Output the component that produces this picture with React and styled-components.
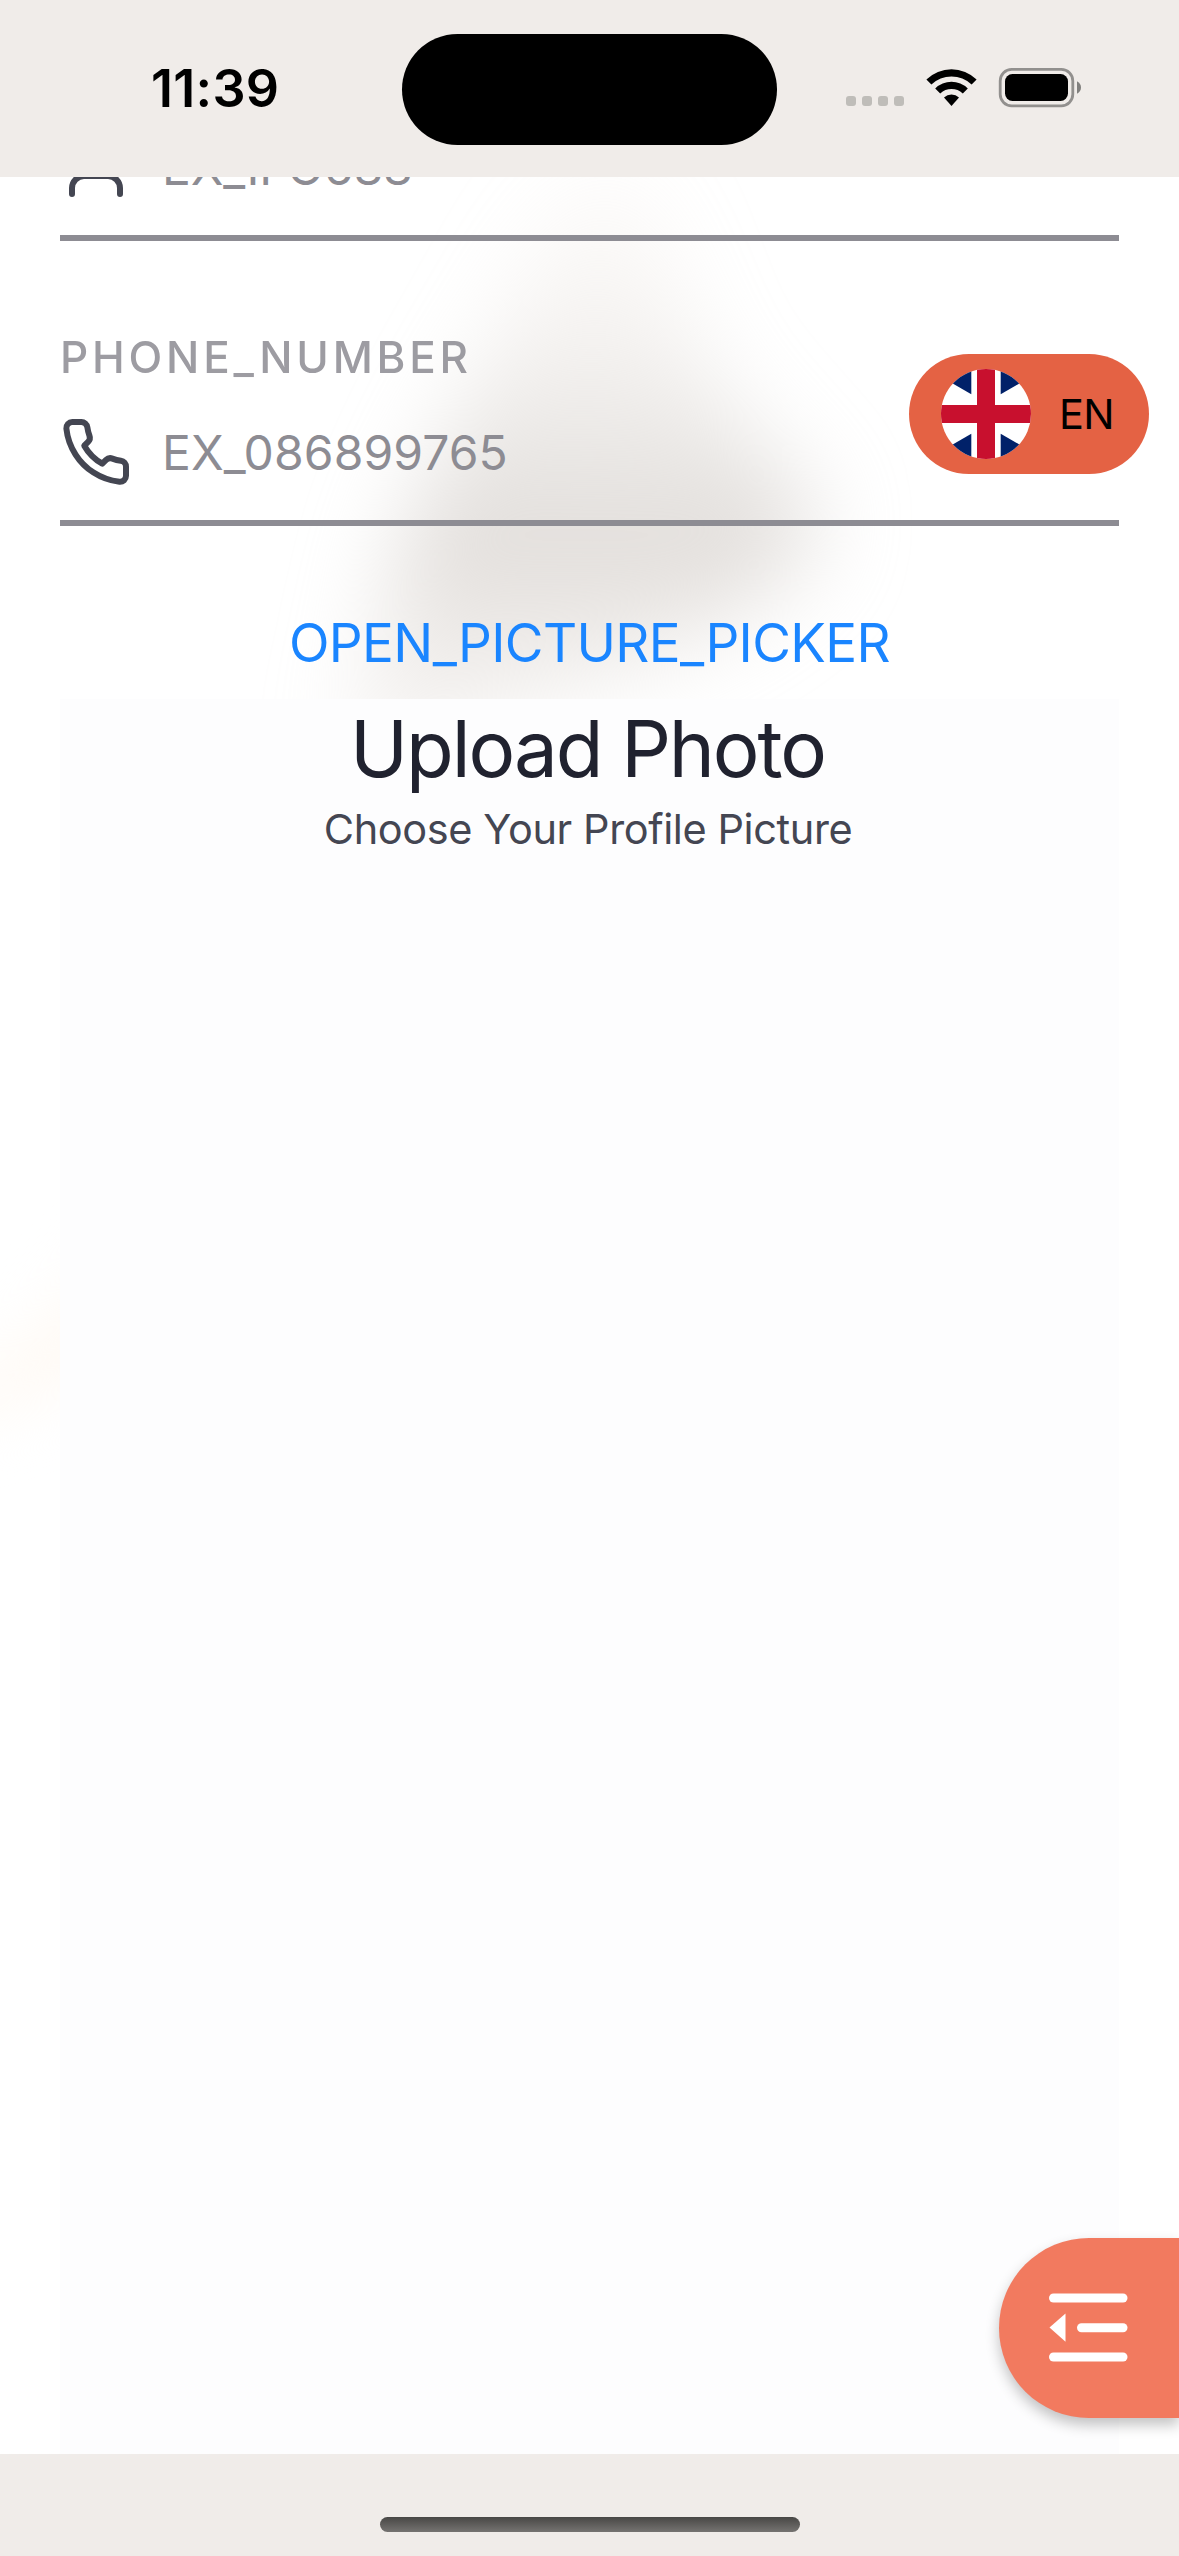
import React from "react";
import styled, { createGlobalStyle } from "styled-components";

const GlobalStyle = createGlobalStyle`
  * { box-sizing: border-box; }
  body { margin: 0; background: #fff; }
`;

const Screen = styled.div`
  position: relative;
  display: flex;
  flex-direction: column;
  width: 1179px;
  height: 2556px;
  overflow: hidden;
  background: #fff;
  font-family: Inter, "Liberation Sans", sans-serif;
`;

const StatusBar = styled.header`
  display: flex;
  flex: none;
  align-items: flex-start;
  height: 177px;
  padding: 33.5px 0 0 151px;
  background: #f0ece9;
`;

const Time = styled.time`
  flex: none;
  width: 251px;
  padding-top: 24px;
  font-size: 52px;
  line-height: 62px;
  font-weight: 600;
  letter-spacing: 0.3px;
  color: #000;
`;

const Island = styled.div`
  flex: none;
  width: 375px;
  height: 111px;
  border-radius: 56px;
  background: #000;
`;

const StatusIcons = styled.svg`
  display: block;
  flex: none;
  margin: 30.5px 0 0 69px;
`;

const Content = styled.main`
  position: relative;
  display: flex;
  flex: 1;
  flex-direction: column;
  min-height: 0;
  overflow: hidden;
  padding: 0 60px;
`;

const Backdrop = styled.svg`
  position: absolute;
  top: 0;
  left: 0;
`;

const Field = styled.label`
  position: relative;
  display: flex;
  flex: none;
  flex-direction: column;
  justify-content: flex-end;
  height: ${(p) => p.$height}px;
  border-bottom: 6px solid #8d8c93;
`;

const FieldLabel = styled.span`
  padding-left: 0;
  margin-bottom: 32px;
  font-size: 44px;
  line-height: 54px;
  font-weight: 450;
  letter-spacing: 3.8px;
  color: #8d8c93;
  opacity: 0.86;
`;

const FieldRow = styled.span`
  display: flex;
  align-items: center;
  height: 72px;
  margin-bottom: 32px;
  gap: 30px;
`;

const Placeholder = styled.span`
  padding-top: 2px;
  font-size: 48px;
  line-height: 58px;
  letter-spacing: ${(p) => p.$track};
  color: #8d8c93;
`;

const LineIcon = styled.svg.attrs({ width: 72, height: 72, viewBox: "0 0 24 24" })`
  flex: none;
  fill: none;
  stroke: #444652;
  stroke-width: 2;
  stroke-linecap: round;
  stroke-linejoin: round;
`;

const PickerLink = styled.button`
  position: relative;
  flex: none;
  height: 173px;
  padding: 61px 0 0;
  border: 0;
  background: none;
  font-family: inherit;
  font-size: 53px;
  line-height: 112px;
  letter-spacing: -0.62px;
  white-space: nowrap;
  color: #1a85ff;
`;

const PhotoPanel = styled.section`
  position: relative;
  display: flex;
  flex: 1;
  flex-direction: column;
  align-items: center;
  padding-top: 2px;
  background: #fdfdfe;
`;

const Title = styled.h1`
  margin: 0;
  padding-right: 4px;
  font-size: 78px;
  line-height: 96px;
  font-weight: 400;
  letter-spacing: -2.1px;
  color: #20222f;
`;

const Subtitle = styled.p`
  margin: 7px 0 0;
  padding-right: 3px;
  font-size: 41.5px;
  line-height: 50px;
  letter-spacing: -0.4px;
  color: #444652;
`;

const LanguagePill = styled.button`
  position: absolute;
  top: 354px;
  left: 909px;
  display: flex;
  align-items: center;
  width: 240px;
  height: 120px;
  padding: 0 0 0 32px;
  gap: 28px;
  border: 0;
  border-radius: 60px;
  background: #e46244;
  font-family: inherit;
  font-size: 41.5px;
  line-height: 50px;
  letter-spacing: -0.6px;
  color: #000;
`;

const MenuButton = styled.button`
  position: absolute;
  top: 2238px;
  right: 0;
  width: 180px;
  height: 180px;
  padding: 0 0 0 49px;
  border: 0;
  border-radius: 90px 0 0 90px;
  background: #f27a5f;
  box-shadow: 0 7px 14px rgba(0, 0, 0, 0.24);

  svg { display: block; }
`;

const HomeBar = styled.footer`
  display: flex;
  flex: none;
  justify-content: center;
  height: 102px;
  padding-top: 63px;
  background: #f0ece9;
`;

const HomeIndicator = styled.div`
  width: 420px;
  height: 15px;
  border-radius: 8px;
  background: linear-gradient(#484745, #757371);
`;

function Status() {
  return (
    <StatusIcons width="240" height="50" viewBox="846 64 240 50">
      {[846, 862, 878, 894].map((x) => (
        <rect key={x} x={x} y="96" width="10" height="10" rx="3" fill="#bfbdb9" />
      ))}
      <path d="M926.4 79.5a36 36 0 0 1 50.2 0l-5 5a29 29 0 0 0-40.2 0z" />
      <path d="M935.2 88.4a23.5 23.5 0 0 1 32.6 0l-5 5a17 17 0 0 0-22.6 0z" />
      <path d="M944 97.4a11.5 11.5 0 0 1 15 0l-7.5 8.6z" />
      <rect x="1000.2" y="69.4" width="72.6" height="36.4" rx="11.5" fill="none" stroke="#92908e" strokeWidth="2.8" />
      <rect x="1005" y="74" width="63" height="27" rx="7.5" />
      <path d="M1077 81.3q4 2.2 4 6.2t-4 6.2z" fill="#81807e" />
    </StatusIcons>
  );
}

function Flag() {
  return (
    <svg width="90" height="90" viewBox="0 0 90 90">
      <defs>
        <clipPath id="round"><circle cx="45" cy="45" r="45" /></clipPath>
      </defs>
      <g clipPath="url(#round)">
        <rect width="90" height="90" fill="#fff" />
        <g fill="#012169">
          <path d="M30.3 25.2V-10H-10V2z" />
          <path d="M59.7 25.2V-10H100V2z" />
          <path d="M30.3 64.8V100H-10V88z" />
          <path d="M59.7 64.8V100H100V88z" />
        </g>
        <path d="M36 0h18v36h36v18H54v36H36V54H0V36h36z" fill="#c8102e" />
      </g>
    </svg>
  );
}

export default function App() {
  return (
    <Screen>
      <GlobalStyle />
      <StatusBar>
        <Time>11:39</Time>
        <Island />
        <Status />
      </StatusBar>
      <Content>
        <Backdrop width="1179" height="1400" viewBox="0 177 1179 1400">
          <defs>
            <linearGradient id="haze" gradientUnits="userSpaceOnUse" x1="600" y1="180" x2="590" y2="750">
              <stop offset="0" stopColor="#e6d8cd" stopOpacity="0.08" />
              <stop offset="0.28" stopColor="#dcd5cf" stopOpacity="0.3" />
              <stop offset="0.5" stopColor="#dad6d2" stopOpacity="0.6" />
              <stop offset="0.64" stopColor="#dad5d1" stopOpacity="0.8" />
              <stop offset="0.8" stopColor="#dbd5d0" stopOpacity="0.48" />
              <stop offset="1" stopColor="#ddd5ce" stopOpacity="0.26" />
            </linearGradient>
            <filter id="soft" x="-40%" y="-40%" width="180%" height="180%" colorInterpolationFilters="sRGB">
              <feGaussianBlur stdDeviation="44" />
            </filter>
            <filter id="faint" x="-80%" y="-80%" width="260%" height="260%" colorInterpolationFilters="sRGB">
              <feGaussianBlur stdDeviation="30" />
            </filter>
          </defs>
          <path
            d="M615 150C660 170 670 270 700 350C730 415 785 460 820 515C810 580 700 650 580 685L340 770L380 620C405 520 445 430 490 340C530 260 560 170 615 150z"
            fill="url(#haze)"
            filter="url(#soft)"
          />
          <path d="M-60 1400L20 1340L130 1240V1370L-60 1430z" fill="#fffaf5" filter="url(#faint)" />
        </Backdrop>
        <Field $height={64}>
          <FieldRow>
            <LineIcon>
              <path d="M20 21v-2a4 4 0 0 0-4-4H8a4 4 0 0 0-4 4v2" />
              <circle cx="12" cy="7" r="4" />
            </LineIcon>
            <Placeholder $track="-0.2px">EX_IFO688</Placeholder>
          </FieldRow>
        </Field>
        <Field $height={285}>
          <FieldLabel>PHONE_NUMBER</FieldLabel>
          <FieldRow>
            <LineIcon>
              <path d="M22 16.92v3a2 2 0 0 1-2.18 2 19.79 19.79 0 0 1-8.63-3.07 19.5 19.5 0 0 1-6-6 19.79 19.79 0 0 1-3.07-8.67A2 2 0 0 1 4.11 2h3a2 2 0 0 1 2 1.72 12.84 12.84 0 0 0 .7 2.81 2 2 0 0 1-.45 2.11L8.09 9.91a16 16 0 0 0 6 6l1.27-1.27a2 2 0 0 1 2.11-.45 12.84 12.84 0 0 0 2.81.7A2 2 0 0 1 22 16.92z" />
            </LineIcon>
            <Placeholder $track="0.1px">EX_086899765</Placeholder>
          </FieldRow>
        </Field>
        <PickerLink>OPEN_PICTURE_PICKER</PickerLink>
        <PhotoPanel>
          <Title>Upload Photo</Title>
          <Subtitle>Choose Your Profile Picture</Subtitle>
        </PhotoPanel>
      </Content>
      <HomeBar>
        <HomeIndicator />
      </HomeBar>
      <LanguagePill>
        <Flag />
        <span>EN</span>
      </LanguagePill>
      <MenuButton aria-label="Menu">
        <svg width="82" height="70" viewBox="0 0 82 70" fill="#fff">
          <rect x="1" y="0.5" width="78.5" height="9" rx="4.5" />
          <rect x="29" y="30.3" width="50.5" height="9" rx="4.5" />
          <rect x="1" y="59.5" width="78.5" height="9" rx="4.5" />
          <path d="M1.5 34.5L17.5 20.5V48.8z" />
        </svg>
      </MenuButton>
    </Screen>
  );
}
